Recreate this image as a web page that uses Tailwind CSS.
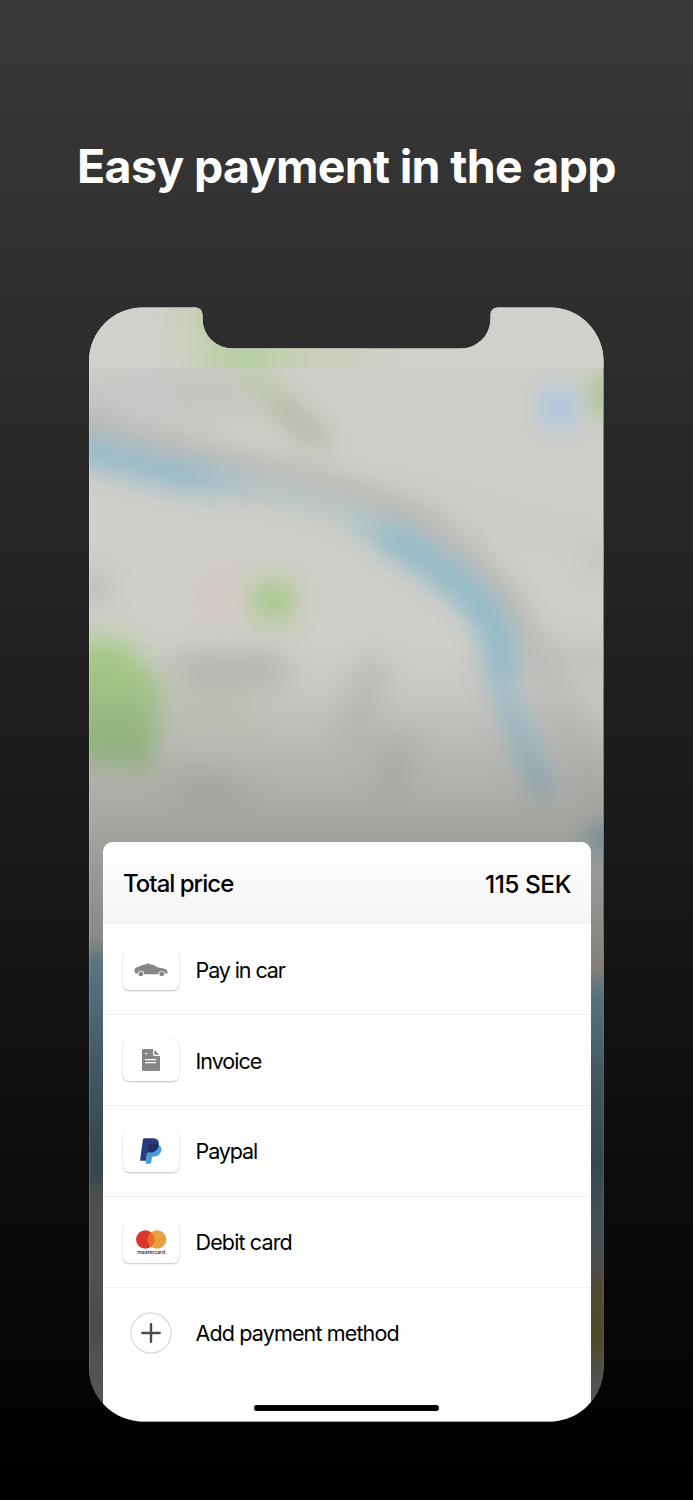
<!DOCTYPE html>
<html lang="en">
<head>
<meta charset="utf-8">
<title>Easy payment in the app</title>
<script src="https://cdn.jsdelivr.net/npm/@tailwindcss/browser@4"></script>
</head>
<body class="h-[1500px] w-[693px] overflow-hidden bg-linear-to-b/srgb from-[#3a3a3a] to-black font-['Inter',sans-serif]">
<main class="flex h-full flex-col items-center">
  <h1 class="mt-[136px] h-[61px] whitespace-nowrap text-[46.5px] leading-[61px] font-bold tracking-[-0.67px] text-white">Easy payment in the app</h1>

  <section class="relative mt-[110px] flex h-[1115px] w-[515px] flex-col pt-[535px] pr-[13px] pl-[14px] [clip-path:path('M0_54A54_53.500_0_0_1_54_0.5H106C110.500_0.500_113.500_3.500_113.500_8V12A30_29.500_0_0_0_144_41.500H371A30_29.500_0_0_0_401.500_12V8C401.500_3.500_404.500_0.500_409_0.500H461A53.500_53.500_0_0_1_514.500_54V1060A53.500_54.500_0_0_1_461_1114.500H54A54_54.500_0_0_1_0_1060Z')]">
    <svg class="absolute inset-0 h-full w-full" viewBox="89 307 515 1115" preserveAspectRatio="none">
      <defs>
        <filter id="b8" x="-100" y="100" width="900" height="1500" filterUnits="userSpaceOnUse" color-interpolation-filters="sRGB"><feGaussianBlur stdDeviation="13"/></filter>
        <filter id="b14" x="-100" y="100" width="900" height="1500" filterUnits="userSpaceOnUse" color-interpolation-filters="sRGB"><feGaussianBlur stdDeviation="16"/></filter>
        <filter id="b24" x="-100" y="100" width="900" height="1500" filterUnits="userSpaceOnUse" color-interpolation-filters="sRGB"><feGaussianBlur stdDeviation="20 8"/></filter>
        <linearGradient id="shade" gradientUnits="userSpaceOnUse" x1="0" y1="640" x2="0" y2="1422">
          <stop offset="0" stop-opacity="0"/><stop offset=".08" stop-opacity=".05"/><stop offset=".25" stop-opacity=".215"/><stop offset=".38" stop-opacity=".34"/><stop offset=".7" stop-opacity=".6"/><stop offset="1" stop-opacity=".6"/>
        </linearGradient>
        <linearGradient id="ls" gradientUnits="userSpaceOnUse" x1="0" y1="920" x2="0" y2="1420">
          <stop offset="0" stop-color="#8c8a85" stop-opacity="0"/><stop offset=".04" stop-color="#898782"/><stop offset=".08" stop-color="#5c7782"/><stop offset=".13" stop-color="#52707c"/><stop offset=".28" stop-color="#425a64"/><stop offset=".47" stop-color="#36474f"/><stop offset=".51" stop-color="#38484e"/><stop offset=".55" stop-color="#4e4e4b"/><stop offset=".7" stop-color="#52514f"/><stop offset=".81" stop-color="#474c50"/><stop offset=".9" stop-color="#545351"/><stop offset="1" stop-color="#585856"/>
        </linearGradient>
        <linearGradient id="rs" gradientUnits="userSpaceOnUse" x1="0" y1="920" x2="0" y2="1420">
          <stop offset="0" stop-color="#8f8d87" stop-opacity="0"/><stop offset=".05" stop-color="#88857e"/><stop offset=".1" stop-color="#817f79"/><stop offset=".15" stop-color="#54727d"/><stop offset=".32" stop-color="#41565f"/><stop offset=".49" stop-color="#35474e"/><stop offset=".62" stop-color="#465055"/><stop offset=".7" stop-color="#4b4b48"/><stop offset=".74" stop-color="#504a33"/><stop offset=".84" stop-color="#4f492b"/><stop offset=".91" stop-color="#51504c"/><stop offset="1" stop-color="#595955"/>
        </linearGradient>
        <clipPath id="top"><rect x="89" y="307" width="515" height="61"/></clipPath>
        <clipPath id="body"><rect x="89" y="368" width="515" height="1054"/></clipPath>
      </defs>
      <rect x="89" y="307" width="515" height="1115" fill="#d0cfc9"/>
      <g clip-path="url(#body)">
        <g filter="url(#b14)" fill="none" stroke-linecap="round">
          <ellipse cx="170" cy="395" rx="100" ry="30" fill="#c6c4c1"/>
          <ellipse cx="137" cy="402" rx="25" ry="20" fill="#c8c9cd"/>
          <path d="M70 422C180 464 330 479 400 514C470 549 512 600 532 655" stroke="#b1b0ac" stroke-width="23"/>
          <path d="M540 650L620 658M545 670L600 800" stroke="#c0beb9" stroke-width="22"/>
          <path d="M400 490L620 550" stroke="#c8c7c2" stroke-width="14"/>
          <path d="M185 667H275" stroke="#adaeaa" stroke-width="23"/>
          <path d="M180 706H245" stroke="#b5c3a5" stroke-width="15"/>
          <path d="M89 588h5" stroke="#a4a4a1" stroke-width="22"/>
          <path d="M374 660L354 735M402 735L390 780" stroke="#adada8" stroke-width="13"/>
          <path d="M180 780L235 790" stroke="#bbbbb7" stroke-width="20"/>
          <ellipse cx="220" cy="597" rx="15" ry="15" fill="#dabfc1"/>
          <ellipse cx="604" cy="560" rx="25" ry="18" fill="#c4c5be"/>
        </g>
        <g filter="url(#b8)" fill="none" stroke-linecap="round">
          <path d="M245 365L276 402" stroke="#b9caa6" stroke-width="20"/>
          <path d="M280 406L320 438" stroke="#aeb4a2" stroke-width="20"/>
          <path d="M60 441C150 470 190 477 215 481" stroke="#8fbacb" stroke-width="27"/>
          <path d="M215 481L260 487" stroke="#a6c0c9" stroke-width="20"/>
          <path d="M255 489C300 495 335 507 365 524" stroke="#b5c7c8" stroke-width="17"/>
          <path d="M362 522L385 534" stroke="#a5c1c9" stroke-width="22"/>
          <path d="M392 539C445 568 481 598 496 630Q502 650 501 668" stroke="#8ab9ca" stroke-width="30"/>
          <path d="M503 685Q518 730 542 785" stroke="#a0c2d0" stroke-width="24"/>
          <rect x="253" y="580" width="42" height="41" rx="9" fill="#a9c889"/>
          <path d="M60 638H126L164 690L150 770L60 757Z" fill="#a6ca8a"/>
          <path d="M60 695L162 695L148 765L60 750Z" fill="#a2c68b"/>
          <rect x="539" y="388" width="38" height="40" rx="8" fill="#adc5e0"/>
          <rect x="594" y="375" width="50" height="40" rx="5" fill="#a2bf88"/>
          <ellipse cx="611" cy="838" rx="28" ry="14" fill="#86adbc"/>
        </g>
      </g>
      <g clip-path="url(#top)">
        <rect x="89" y="307" width="515" height="61" fill="#d2d0ca"/>
        <g filter="url(#b24)"><path d="M194 270H250L290 340V400H205Z" fill="#bbcfa4"/><rect x="285" y="335" width="70" height="55" fill="#c9cebc"/></g>
      </g>
      <rect x="89" y="640" width="515" height="782" fill="url(#shade)"/>
      <rect x="89" y="920" width="15" height="502" fill="url(#ls)"/>
      <rect x="590" y="920" width="14" height="502" fill="url(#rs)"/>
      <path d="M89.500 360V1370M603.200 360V1370" stroke="#fff" stroke-opacity=".16" fill="none"/>
    </svg>

    <div class="relative flex h-[580px] flex-col overflow-hidden rounded-t-[10px] bg-white text-black">
      <header class="flex h-[82px] shrink-0 items-center justify-between bg-linear-to-b from-white to-[#f5f5f5] pr-5 pl-5 pt-[2px] text-[24px] font-[450]">
        <span class="tracking-[-0.98px]">Total price</span><span class="text-[24.5px] leading-[34px] tracking-[-0.5px]">115 SEK</span>
      </header>
      <ul class="flex flex-col text-[21.5px] tracking-[-0.86px]">
        <li class="flex h-[91px] items-center gap-[16.5px] border-b border-[#f0f0f0] pl-5">
          <span class="flex h-[42px] w-[56px] items-center justify-center rounded-[6px] bg-white shadow-[0_1px_2px_rgba(0,0,0,0.24),0_0_1px_rgba(0,0,0,0.1)]">
            <svg class="mt-px h-[14px] w-[34px]" viewBox="0 0 34 14" fill="#868686"><path d="M.6 7.500C.3 5.800 1 5 2.500 4.400L8.500 2.100Q10.500 1.400 12.500 1.300L12.800.3H14.700L15 1.200C19 1.300 21 2.300 24 4.600C28.500 5 31.500 5.900 33 7.300Q33.800 8.500 33.400 10.300L31 11A3.200 3.200 0 0 0 24.600 11.200H10.100A3.200 3.200 0 0 0 3.700 10.800L1.500 10.200Q.2 9.300.6 7.500Z"/><circle cx="6.900" cy="10.900" r="2.400"/><circle cx="27.800" cy="10.900" r="2.400"/></svg>
          </span>
          <span class="pt-[2px] tracking-[-1.1px]">Pay in car</span>
        </li>
        <li class="flex h-[91px] items-center gap-[16.5px] border-b border-[#f0f0f0] pl-5">
          <span class="flex h-[42px] w-[56px] items-center justify-center rounded-[6px] bg-white shadow-[0_1px_2px_rgba(0,0,0,0.24),0_0_1px_rgba(0,0,0,0.1)]">
            <svg class="h-[22px] w-[18px]" viewBox="0 0 18 22"><path d="M1.300 0H11V5.500Q11 7 12.500 7H18V20.700Q18 22 16.700 22H1.300Q0 22 0 20.700V1.300Q0 0 1.300 0ZM12.300.7L17.300 5.700H12.300Z" fill="#868686"/><path d="M3 4.700H5.500M3 10.600H14M3 13.600H14" stroke="#fff" stroke-width="1.100"/></svg>
          </span>
          <span class="pt-[2px] tracking-[-1px]">Invoice</span>
        </li>
        <li class="flex h-[91px] items-center gap-[16.5px] border-b border-[#f0f0f0] pl-5">
          <span class="flex h-[42px] w-[56px] items-center justify-center rounded-[6px] bg-white shadow-[0_1px_2px_rgba(0,0,0,0.24),0_0_1px_rgba(0,0,0,0.1)]">
            <svg class="h-[26px] w-[22px]" viewBox="0 0 22 26"><path d="M18.600 6.700Q22.500 9 21.100 13.200C20 17 17 18.500 13.200 18.500Q12.200 18.600 12 19.500L11 25Q10.900 25.700 10.200 25.700H6.200Q5.400 25.700 5.500 24.900L8.500 8Z" fill="#469bdb"/><path d="M3.900.2H12.500C17 .2 19.400 2.400 18.800 6.700C18 12 14.800 14.300 10 14.300H8.300Q7.200 14.300 7 15.500L5.900 22.700H.8Q0 22.700.1 21.900L3 1Q3.100.2 3.900.2Z" fill="#263b80"/><path d="M18.700 6.700C18 12 14.800 14.300 10 14.300H8.300Q7.200 14.300 7 15.500L6.800 16.800L8.200 7.500Q8.500 5.900 10 5.900H15.500Q17.300 5.900 18.700 6.700Z" fill="#232c65"/></svg>
          </span>
          <span class="tracking-[-1.1px]">Paypal</span>
        </li>
        <li class="flex h-[91px] items-center gap-[16.5px] border-b border-[#f0f0f0] pl-5">
          <span class="flex h-[42px] w-[56px] items-center justify-center rounded-[6px] bg-white shadow-[0_1px_2px_rgba(0,0,0,0.24),0_0_1px_rgba(0,0,0,0.1)]">
            <svg class="h-[26px] w-[32px]" viewBox="0 0 32 26"><circle cx="10.300" cy="10.500" r="9.300" fill="#d9372c"/><circle cx="22" cy="10.500" r="9.300" fill="#eba03f"/><path d="M16.150 3.270A9.300 9.300 0 0 1 16.150 17.730A9.300 9.300 0 0 1 16.150 3.270Z" fill="#ee6a2a"/><text x="2.200" y="24.800" textLength="28" lengthAdjust="spacingAndGlyphs" font-size="5" font-weight="500" letter-spacing="0" fill="#222">mastercard</text></svg>
          </span>
          <span>Debit card</span>
        </li>
        <li class="flex h-[91px] items-center gap-[16.5px] border-b border-[#fafafa] pl-5">
          <span class="flex w-[56px] justify-center">
            <svg class="h-[42px] w-[42px]" viewBox="0 0 42 42" fill="none"><circle cx="21" cy="21" r="20.100" stroke="#d8d8d8" stroke-width="1.200"/><path d="M21 12.300V29.700M12.300 21H29.700" stroke="#4a4a4a" stroke-width="2.400" stroke-linecap="round"/></svg>
          </span>
          <span>Add payment method</span>
        </li>
      </ul>
      <div class="mt-[25.500px] ml-[151px] h-[6.500px] w-[185px] rounded-full bg-black"></div>
    </div>
  </section>
</main>
</body>
</html>
